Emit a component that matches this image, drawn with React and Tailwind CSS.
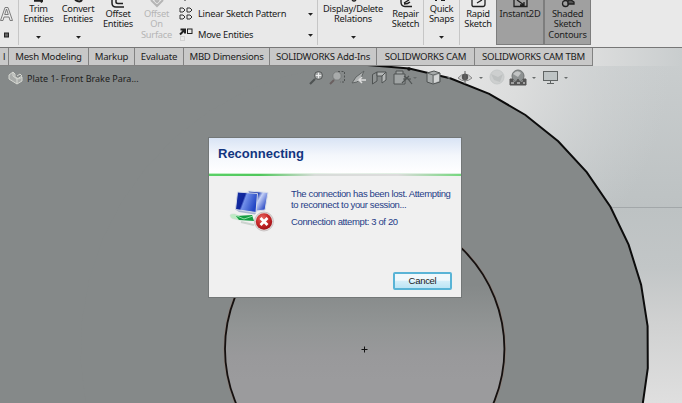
import React from 'react';

const outerPoints = [];
for (let i = -13; i <= 32; i++) {
  const a = ((4.6 + i * 8.48) * Math.PI) / 180;
  if (a > -2 && a < 4.3) {
    outerPoints.push(`${(364.5 + 284 * Math.cos(a)).toFixed(1)},${(284 + 284 * -Math.sin(a)).toFixed(1)}`);
  }
}

function Caret({ className = '' }) {
  return (
    <svg className={`h-[3px] w-[5px] shrink-0 ${className}`} viewBox="0 0 5 3">
      <path d="M0 0H5L2.5 2.8Z" fill="currentColor" />
    </svg>
  );
}

function Tool({ lines, width, pad, caret, tone = 'text-[#202020]', bg = '', icon }) {
  return (
    <div className={`relative h-full shrink-0 ${width} ${pad} ${tone} ${bg}`}>
      <svg className="absolute left-1/2 top-0 h-2 w-5 -translate-x-1/2" viewBox="0 0 20 8" fill="none" stroke="currentColor" strokeWidth="1.3">
        {icon}
      </svg>
      <div className="flex flex-col items-center whitespace-nowrap text-center leading-[10.4px]">
        {lines.map((l) => (
          <span key={l}>{l}</span>
        ))}
      </div>
      {caret && <div className="flex justify-center pt-[11px]"><Caret /></div>}
    </div>
  );
}

function Divider() {
  return <div className="h-[45px] w-px shrink-0 bg-[#c6c6c6]" />;
}

function Ribbon() {
  return (
    <div className="flex h-[47px] w-full overflow-hidden bg-[#e9e9e9] text-[9.3px] tracking-[-0.25px]">
      <div className="flex w-[18px] shrink-0 flex-col items-start">
        <svg className="h-[47px] w-[18px]" viewBox="0 0 18 47" fill="none" stroke="#707070">
          <path d="M.5 20.5H3L4 17H9L10 20.5H12.5L8 7.5H5Z M4.7 14.5L6.5 9L8.3 14.5Z" strokeWidth=".9" />
          <rect x="4.5" y="33" width="4" height="4" fill="#666" stroke="#222" />
        </svg>
      </div>
      <Divider />
      <Tool width="w-[39px]" pad="pt-[4px]" lines={['Trim', 'Entities']} caret icon={<path d="M5 .8H14M11 0L13 2.5" strokeWidth="2" />} />
      <Tool width="w-[40px]" pad="pt-[4px]" lines={['Convert', 'Entities']} caret icon={<path d="M7 0Q12 3 14 0" strokeWidth="2" />} />
      <Tool width="w-[40px]" pad="pt-[9px]" lines={['Offset', 'Entities']} icon={<path d="M4 0V3Q4 7 8 7H16M8 0V2Q8 3.5 10 3.5H15" strokeWidth="1.5" />} />
      <Tool width="w-[37px]" pad="pt-[9px]" tone="text-[#b5b5b5]" lines={['Offset', 'On', 'Surface']} icon={<path d="M4 0L10 6L16 0M8 0L10 2L12 0" strokeWidth="2" />} />
      <div className="flex w-[142px] shrink-0 flex-col text-[#202020]">
        <div className="flex h-[28px] items-center pl-[4px]">
          <svg className="h-[28px] w-[19px] shrink-0" viewBox="0 0 19 28" fill="none" stroke="#303030">
            <path d="M5 0H7M1 8H4L6 10L4 12H1ZM8 8H11L13 10L11 12H8ZM1 15H4L6 17L4 19H1ZM8 15H11L13 17L11 19H8Z" />
          </svg>
          <span className="w-[110px]">Linear Sketch Pattern</span>
          <Caret />
        </div>
        <div className="flex h-[14px] items-center pl-[4px]">
          <svg className="h-[14px] w-[19px] shrink-0" viewBox="0 0 19 14" fill="none" stroke="#202020">
            <path d="M1 6.5L5 2.5M1.5 1.5H6V5.5" strokeWidth="2" />
            <rect x="8.5" y="1" width="4.5" height="4.5" />
            <rect x="1.5" y="8.5" width="4" height="4" stroke="#bbb" strokeDasharray="1 1" />
          </svg>
          <span className="w-[110px]">Move Entities</span>
          <Caret />
        </div>
      </div>
      <Divider />
      <Tool width="w-[70px]" pad="pt-[4px]" lines={['Display/Delete', 'Relations']} caret icon={<path d="M9 0Q11 2 13 0" />} />
      <Tool width="w-[35px]" pad="pt-[9px]" lines={['Repair', 'Sketch']} icon={<path d="M5 0V2Q5 6.5 9 6.5H16M8 3L13 0M8 4Q12 4 14 2" strokeWidth="1.4" />} />
      <Divider />
      <Tool width="w-[35px]" pad="pt-[4px]" lines={['Quick', 'Snaps']} caret icon={<path d="M4 0V1M9 0H13" strokeWidth="2" />} />
      <Divider />
      <Tool width="w-[36px]" pad="pt-[9px]" lines={['Rapid', 'Sketch']} icon={<path d="M4 0V5Q4 6.5 6 6.5H15Q17 6.5 17 4V0M9 3L14 0" />} />
      <Tool width="w-[48px]" pad="pt-[9px]" bg="bg-[#a0a0a0] border-x border-b border-[#7d7d7d] !h-[45px]" lines={['Instant2D']} icon={<path d="M4 0V6.5H17V0M7 0L14 5M10 5H14V2" />} />
      <Tool width="w-[47px]" pad="pt-[9px]" bg="bg-[#a0a0a0] border-x border-b border-[#7d7d7d] !h-[45px]" lines={['Shaded', 'Sketch', 'Contours']} icon={<><circle cx="7.5" cy="3.5" r="3" /><path d="M10 0V4H16V2L13 0Z" fill="#555" /></>} />
    </div>
  );
}

const tabs = [
  ['l', 'w-[9px]'],
  ['Mesh Modeling', 'w-[80px]'],
  ['Markup', 'w-[46px]'],
  ['Evaluate', 'w-[49px]'],
  ['MBD Dimensions', 'w-[86px]'],
  ['SOLIDWORKS Add-Ins', 'w-[107px]'],
  ['SOLIDWORKS CAM', 'w-[98px]'],
  ['SOLIDWORKS CAM TBM', 'w-[118px]'],
];

function TabBar() {
  return (
    <div className="flex h-[19px] w-full border-t border-[#777] text-[9.6px] tracking-[-0.25px] text-[#202020]">
      {tabs.map(([name, width]) => (
        <div key={name} className={`flex shrink-0 items-center justify-center whitespace-nowrap border-b border-r border-[#828282] bg-[#c8c8c8] pt-px ${width}`}>
          {name}
        </div>
      ))}
    </div>
  );
}

function Scene() {
  return (
    <svg className="absolute inset-0 h-[338px] w-[682px]" viewBox="0 0 682 338">
      <defs>
        <linearGradient id="sky" x1="0" y1="0" x2="0" y2="1">
          <stop offset="0" stopColor="#c9cdce" />
          <stop offset=".42" stopColor="#bdc2c3" />
          <stop offset=".6" stopColor="#c2c6c7" />
          <stop offset=".76" stopColor="#d0d1d1" />
          <stop offset="1" stopColor="#dfdfdf" />
        </linearGradient>
        <radialGradient id="glow" gradientUnits="userSpaceOnUse" cx="440" cy="0" r="230">
          <stop offset="0" stopColor="#e6e6e6" />
          <stop offset=".35" stopColor="#dcdddd" />
          <stop offset="1" stopColor="#d0d3d4" stopOpacity="0" />
        </radialGradient>
        <linearGradient id="bore" gradientUnits="userSpaceOnUse" x1="0" y1="220" x2="0" y2="315">
          <stop offset="0" stopColor="#858989" />
          <stop offset=".45" stopColor="#929595" />
          <stop offset=".75" stopColor="#99999b" />
          <stop offset="1" stopColor="#9b9b9d" />
        </linearGradient>
      </defs>
      <rect width="682" height="338" fill="url(#sky)" />
      <rect width="682" height="338" fill="url(#glow)" />
      <path d="M610 142.5H682" stroke="#a2a7a9" />
      <path d="M0 0H365V338H0Z" fill="#858989" />
      <polygon points={outerPoints.join(' ')} fill="#858989" />
      <polyline points={outerPoints.filter((p) => parseFloat(p) > 362).join(' ')} fill="none" stroke="#0c0c0c" strokeWidth="2" />
      <circle cx="364.7" cy="284" r="140.8" fill="none" stroke="#8d7f78" strokeWidth="1" />
      <circle cx="364.7" cy="284" r="139.7" fill="url(#bore)" stroke="#15100f" strokeWidth="1.8" />
      <path d="M361.5 284.5H367.5M364.5 281.5V287.5" stroke="#111" />
      <circle cx="409" cy="4" r="1.8" fill="#111" />
    </svg>
  );
}

function HudIcons() {
  return (
    <div className="flex h-[24px] w-[270px] shrink-0 text-[#666]">
      <svg className="h-[24px] w-[270px]" viewBox="306 66 270 24" fill="none" stroke="#4f5353" strokeWidth="1">
        <circle cx="318.5" cy="75.5" r="4" fill="#a8abab" />
        <path d="M315 79L310 84" strokeWidth="2.2" />
        <path d="M316 75.5H321M318.5 73V78" stroke="#eee" />
        <circle cx="337" cy="76" r="4.2" fill="#a8abab" stroke="#777b7b" />
        <path d="M334 80L330 84" strokeWidth="2" stroke="#6a6060" />
        <path d="M338 71.5H344.5V82H340" strokeDasharray="2 1.5" />
        <path d="M352 83L356 77L364 71L361 78L357 82Z" fill="#b1b4b4" stroke="#606464" />
        <path d="M366 80H359L362 77M359 80L362 83" stroke="#ddd" strokeWidth="1.5" />
        <path d="M372.5 74.5L377 72V81L372.5 84Z" fill="#8f9393" />
        <path d="M377 72H386V80L382 83V76H377Z" fill="#b3b6b6" />
        <path d="M382 76L386 72" />
        <path d="M394 74H405V84H394ZM396 74V71H403V74" fill="#a0a4a4" />
        <path d="M404 76L408 79L412 84M402 83L409 76M403 79H411" strokeWidth="1.2" />
        <path d="M427 73L434 71L440 73V82L433 84L427 82Z" fill="#a7abab" />
        <path d="M427 73L433 75L440 73M433 75V84" stroke="#666a6a" />
        <path d="M434 76L439 74V81L434 83Z" fill="#d4d6d6" stroke="none" />
        <path d="M458 78Q465 70 472 78Q465 84 458 78Z" fill="#d0d0d0" stroke="#8a8a8a" />
        <circle cx="465" cy="77" r="3.2" fill="#555" stroke="none" />
        <path d="M465 71V84" stroke="#666" />
        <circle cx="497" cy="77" r="7" fill="#cdcfcf" stroke="#c6c9c9" />
        <path d="M491 74L498 77L503 74L500 82L494 80" fill="#bec1c1" stroke="none" />
        <circle cx="518" cy="76" r="6" fill="#8d9191" stroke="#707474" />
        <path d="M513 74Q517 69 521 73L518 77Z" fill="#c2c4c4" stroke="none" />
        <path d="M510 85V79H513V82H516L518 79L520 82H523V79H526V85Z" fill="#555" stroke="#555" />
        <path d="M511 83H514M517 83H520M523 83H525" stroke="#eee" />
        <rect x="543.5" y="71.5" width="14" height="9" fill="#bec4c5" stroke="#606464" />
        <path d="M550.5 81V83.5M547 83.5H554" stroke="#606464" />
        <path d="M413 77H417L415 79ZM447 77H451L449 79ZM479 77H483L481 79ZM532 77H536L534 79ZM564 77H568L566 79Z" fill="#686c6c" stroke="none" />
      </svg>
    </div>
  );
}

function ConnectionIcon() {
  return (
    <svg className="ml-px mt-[2px] h-[42px] w-[48px] shrink-0" viewBox="0 0 48 42">
      <defs>
        <linearGradient id="screen" x1="0" y1="0" x2="1" y2=".35">
          <stop offset="0" stopColor="#1631a5" />
          <stop offset=".42" stopColor="#10259b" />
          <stop offset=".5" stopColor="#7391ea" />
          <stop offset="1" stopColor="#2346c4" />
        </linearGradient>
        <linearGradient id="rear" x1="0" y1="0" x2="1" y2=".6">
          <stop offset="0" stopColor="#1c32a2" />
          <stop offset=".45" stopColor="#2c4ab8" />
          <stop offset=".6" stopColor="#c6d2f7" />
          <stop offset="1" stopColor="#2a49c4" />
        </linearGradient>
        <radialGradient id="error" cx=".4" cy=".3" r=".7">
          <stop offset="0" stopColor="#e66a65" />
          <stop offset=".55" stopColor="#c92a2a" />
          <stop offset="1" stopColor="#a31218" />
        </radialGradient>
      </defs>
      <path d="M19 1L39 2.5L36 20L27 21Z" fill="url(#rear)" stroke="#d8deea" />
      <path d="M8.5 2L28.5 3.5L27 22.5L6.5 19.5Z" fill="url(#screen)" stroke="#d3d9e8" />
      <path d="M7 20L27 23L26 24.5L10 22Z" fill="#a9b5d0" />
      <path d="M1 25Q2 23.5 6 24L10 26V30L3 28.5Q1 27 1 25Z" fill="#bdeac4" stroke="#ced8d0" strokeWidth=".5" />
      <path d="M7 26L23 25L25 31L10 30Z" fill="#159d42" />
      <path d="M8 26L15 29L24 26" stroke="#8de0a3" fill="none" />
      <path d="M12 32L25 35" stroke="#ccd3cf" strokeWidth="2" />
      <circle cx="35" cy="31.5" r="9.5" fill="#e3dddd" stroke="#a8a1a1" strokeWidth=".5" />
      <circle cx="35" cy="31.5" r="8.2" fill="url(#error)" />
      <path d="M31.5 28L38.5 35M38.5 28L31.5 35" stroke="white" strokeWidth="2.7" />
    </svg>
  );
}

function ReconnectDialog() {
  return (
    <div className="absolute left-[208px] top-[137px] flex h-[161px] w-[254px] flex-col border border-[#737777] bg-[#f0f0f0] text-[#1e3c87]" style={{ fontFamily: '"Liberation Sans", Arial, sans-serif' }}>
      <div className="flex h-[35px] items-center bg-linear-to-b from-[#d9e4f5] via-[#f4f7fc] to-white pb-[3px] pl-[9px]">
        <h1 className="text-[13px] font-bold text-[#123580]">Reconnecting</h1>
      </div>
      <div className="h-px bg-linear-to-r from-[#b8f0bc] via-[#e9efea] to-[#d8f0dc]" />
      <div className="h-[2px] bg-[linear-gradient(90deg,#5bd067,#4fc75b_20%,#d8dcd9_42%,#dcdcdc_75%,#75d77e)]" />
      <div className="flex pl-[19px] pt-[12px]">
        <ConnectionIcon />
        <div className="ml-[14px] mt-px whitespace-nowrap text-[9.5px] leading-[10.5px] tracking-[-0.37px]">
          <p>The connection has been lost. Attempting</p>
          <p>to reconnect to your session...</p>
          <p className="mt-[7px]">Connection attempt: 3 of 20</p>
        </div>
      </div>
      <div className="mt-auto flex justify-end pb-[7px] pr-[9px]">
        <button className="flex h-[18px] w-[59px] items-center justify-center rounded-[2px] border-2 border-[#59b4d6] bg-linear-to-b from-[#f0f8fb] from-45% via-[#d5eff9] via-50% to-[#bce5f5] text-[9.5px] tracking-[-0.3px] text-[#202020]">Cancel</button>
      </div>
    </div>
  );
}

export default function App() {
  return (
    <div className="relative flex h-[403px] w-[682px] flex-col overflow-hidden bg-[#e9e9e9]" style={{ fontFamily: '"Noto Sans", "Open Sans", sans-serif' }}>
      <Ribbon />
      <div className="relative flex h-[356px] w-full flex-col">
        <div className="absolute left-0 top-[18px]">
          <Scene />
        </div>
        <div className="absolute right-0 top-0 h-[19px] w-[90px] bg-linear-to-r from-[#dcdddd] to-[#c9cdce]" />
        <div className="relative">
          <TabBar />
          <div className="flex h-[23px] items-start pl-[8px]">
            <svg className="mt-[5px] h-[14px] w-[17px] shrink-0" viewBox="0 0 17 14" fill="#a9acaa" stroke="#d6d8d2">
              <path d="M1 4L5 1L7 3V6L11 8L14 6V10L9 13L1 8Z" />
              <path d="M5 1V5L9 8V13M9 8L14 5L12 3L9 5" fill="none" />
            </svg>
            <span className="ml-[2px] mt-[6px] w-[279px] whitespace-nowrap text-[9px] leading-[13px] text-[#202020]">Plate 1- Front Brake Para...</span>
            <HudIcons />
          </div>
        </div>
      </div>
      <ReconnectDialog />
    </div>
  );
}
